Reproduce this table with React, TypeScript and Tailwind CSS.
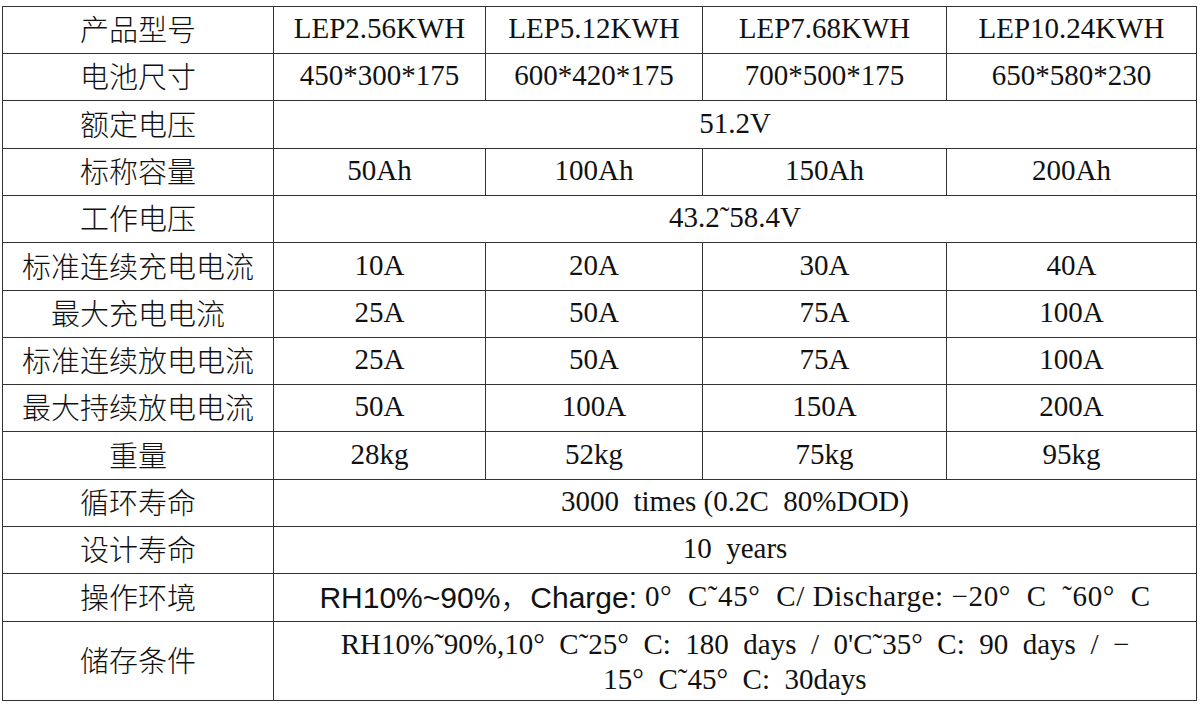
const serif = "font-['Liberation_Serif','Noto_Sans_CJK_SC',serif]";

type Row = { label: string; cells: string[]; h: string };

const rows: Row[] = [
  { label: "产品型号", cells: ["LEP2.56KWH", "LEP5.12KWH", "LEP7.68KWH", "LEP10.24KWH"], h: "h-[47px]" },
  { label: "电池尺寸", cells: ["450*300*175", "600*420*175", "700*500*175", "650*580*230"], h: "h-[47px]" },
  { label: "额定电压", cells: ["51.2V"], h: "h-[48px]" },
  { label: "标称容量", cells: ["50Ah", "100Ah", "150Ah", "200Ah"], h: "h-[47px]" },
  { label: "工作电压", cells: ["43.2˜58.4V"], h: "h-[47px]" },
  { label: "标准连续充电电流", cells: ["10A", "20A", "30A", "40A"], h: "h-[48px]" },
  { label: "最大充电电流", cells: ["25A", "50A", "75A", "100A"], h: "h-[47px]" },
  { label: "标准连续放电电流", cells: ["25A", "50A", "75A", "100A"], h: "h-[47px]" },
  { label: "最大持续放电电流", cells: ["50A", "100A", "150A", "200A"], h: "h-[47px]" },
  { label: "重量", cells: ["28kg", "52kg", "75kg", "95kg"], h: "h-[48px]" },
  { label: "循环寿命", cells: ["3000  times (0.2C  80%DOD)"], h: "h-[47px]" },
  { label: "设计寿命", cells: ["10  years"], h: "h-[47px]" },
];

const Cell = ({ children, span, h }: { children: React.ReactNode; span?: boolean; h: string }) => (
  <div
    className={`${h} ${span ? "col-span-4" : ""} flex items-center justify-center pb-[2px] border-r border-b border-[#333] text-center text-[29px] text-[#111] whitespace-pre`}
  >
    {children}
  </div>
);

const Label = ({ text, h }: { text: string; h: string }) => (
  <Cell h={h}>
    <span className="font-['Noto_Sans_CJK_SC',sans-serif] font-light text-[29px]">{text}</span>
  </Cell>
);

export default function App() {
  return (
    <div className="w-[1200px] h-[711px] bg-white overflow-hidden">
      <div
        className={`ml-[2px] mt-[6px] grid grid-cols-[271px_212px_217px_244px_250px] border-l border-t border-[#333] w-[1195px] ${serif}`}
      >
        {rows.map((r) => (
          <div key={r.label} className="contents">
            <Label text={r.label} h={r.h} />
            {r.cells.length === 1 ? (
              <Cell span h={r.h}>{r.cells[0]}</Cell>
            ) : (
              r.cells.map((c, i) => (
                <Cell key={i} h={r.h}>{c}</Cell>
              ))
            )}
          </div>
        ))}

        <Label text="操作环境" h="h-[48px]" />
        <Cell span h="h-[48px]">
          <span className="font-['Liberation_Sans',sans-serif] text-[30px]">
            RH10%~90%<span className="font-['Noto_Sans_CJK_SC',sans-serif] font-light">，</span>Charge:
          </span>
          <span className="tracking-[0.6px]">{" 0°  C˜45°  C/ Discharge: −20°  C  ˜60°  C"}</span>
        </Cell>

        <Label text="储存条件" h="h-[79px]" />
        <Cell span h="h-[79px]">
          <div className="leading-[35px] pt-[3px]">
            <div>{"RH10%˜90%,10°  C˜25°  C:  180  days  /  0'C˜35°  C:  90  days  /  −"}</div>
            <div>{"15°  C˜45°  C:  30days"}</div>
          </div>
        </Cell>
      </div>
    </div>
  );
}
